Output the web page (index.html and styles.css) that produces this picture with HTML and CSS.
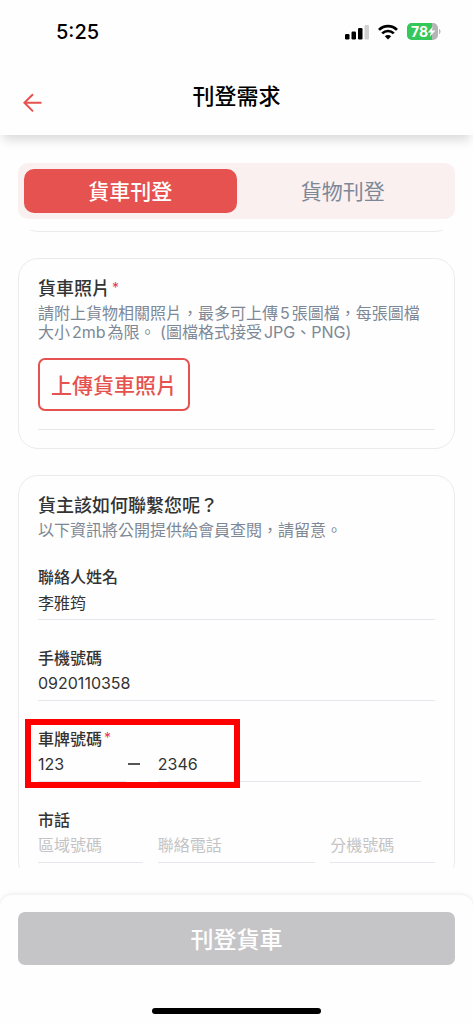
FILE: index.html
```html
<!DOCTYPE html>
<html lang="zh-Hant">
<head>
<meta charset="utf-8">
<meta name="viewport" content="width=device-width, initial-scale=1">
<title>刊登需求</title>
<link rel="stylesheet" href="styles.css">
</head>
<body>
<div class="app">
  <header class="top">
    <div class="status">
      <time class="clock">5:25</time>
      <div class="status-icons">
        <svg width="24" height="16" viewBox="0 0 24 16" aria-hidden="true">
          <rect x="0" y="10" width="4.500" height="5.500" rx="1.200"/>
          <rect x="6.500" y="7.500" width="4.500" height="8" rx="1.200"/>
          <rect x="13" y="4" width="4.500" height="11.500" rx="1.200"/>
          <rect x="19.500" y="1" width="4.500" height="14.500" rx="1.200" fill="#d0d0d0"/>
        </svg>
        <svg width="20" height="16" viewBox="0 0 20 16" fill="none" stroke="#000" stroke-width="2.7" aria-hidden="true">
          <path d="M1 5.9C6 .9 14 .9 19 5.9"/>
          <path d="M4.2 9.4c3.3-3.2 8.3-3.2 11.6 0"/>
          <path d="M6.8 12.2c1.8-1.7 4.6-1.7 6.4 0L10 15.6z" fill="#000" stroke="none"/>
        </svg>
        <svg width="34" height="18" viewBox="0 0 34 18" aria-label="78%">
          <defs><clipPath id="cell"><rect width="31" height="17" rx="5"/></clipPath></defs>
          <g clip-path="url(#cell)"><rect width="31" height="17" fill="#b5b5b5"/><rect width="25" height="17" fill="#34c759"/></g>
          <path d="M32 6c2 .6 2 4.400 0 5z" fill="#b5b5b5"/>
          <text class="charge" x="4" y="14">78</text>
          <path d="M25.800 3.500 20.800 9.500h3.200L22.600 14l5.800-6.500h-3.600z" fill="#fff"/>
        </svg>
      </div>
    </div>
    <div class="bar">
      <button class="back" type="button" aria-label="返回">
        <svg width="20" height="20" viewBox="0 0 20 20" fill="none" stroke="#e5524f" stroke-width="2"><path d="M18.500 9.800H1.500M10 1.200 1.400 9.800l8.600 8.600"/></svg>
      </button>
      <h1 class="title">刊登需求</h1>
    </div>
  </header>

  <main class="content">
    <nav class="tabs">
      <button class="tab tab-active" type="button">貨車刊登</button>
      <button class="tab" type="button">貨物刊登</button>
    </nav>

    <form class="scroll" id="truck-form">
      <div class="previous"></div>

      <section class="card">
        <h2 class="heading">貨車照片<span class="required">*</span></h2>
        <p class="hint">請附上貨物相關照片，最多可上傳5張圖檔，每張圖檔大小2mb為限。 (圖檔格式接受JPG、PNG)</p>
        <button class="upload" type="button">上傳貨車照片</button>
        <hr class="rule">
      </section>

      <section class="card">
        <h2 class="heading">貨主該如何聯繫您呢？</h2>
        <p class="hint">以下資訊將公開提供給會員查閱，請留意。</p>
        <div class="fields">
          <div class="field">
            <label class="label" for="name">聯絡人姓名</label>
            <input class="input" id="name" type="text" value="李雅筠">
          </div>
          <div class="field">
            <label class="label" for="mobile">手機號碼</label>
            <input class="input" id="mobile" type="tel" value="0920110358">
          </div>
          <div class="field">
            <label class="label" for="plate">車牌號碼<span class="required">*</span></label>
            <div class="plate">
              <input class="input" id="plate" type="text" value="123">
              <span class="dash"></span>
              <input class="input" type="text" value="2346" aria-label="車牌號碼後段">
            </div>
            <div class="highlight"></div>
          </div>
          <div class="field">
            <label class="label" for="area">市話</label>
            <div class="landline">
              <input class="input" id="area" type="tel" placeholder="區域號碼">
              <input class="input" type="tel" placeholder="聯絡電話" aria-label="聯絡電話">
              <input class="input" type="tel" placeholder="分機號碼" aria-label="分機號碼">
            </div>
          </div>
        </div>
      </section>
    </form>
  </main>

  <footer class="bottom">
    <button class="submit" type="submit" form="truck-form" disabled>刊登貨車</button>
    <div class="home"></div>
  </footer>
</div>
</body>
</html>
```
FILE: styles.css
```css
* {
  box-sizing: border-box;
}

body {
  margin: 0;
  background: #fefefe;
  color: #333;
  font-family: Inter, "Noto Sans CJK TC", sans-serif;
  font-size: 16px;
  text-autospace: normal;
}

button,
input {
  font: inherit;
}

.app {
  display: flex;
  flex-direction: column;
  height: 100vh;
}

.top {
  background: #fefefe;
  box-shadow: 0 8px 10px -3px rgba(0, 0, 0, 0.14);
}

.status {
  display: flex;
  align-items: center;
  justify-content: space-between;
  height: 56px;
  padding: 7px 32px 0 56px;
}

.clock {
  color: #000;
  font-size: 20px;
  font-weight: 500;
}

.status-icons {
  display: flex;
  align-items: center;
  gap: 9px;
}

.charge {
  fill: #fff;
  font-size: 14px;
  font-weight: 700;
}

.bar {
  display: grid;
  grid-template-columns: 20px 1fr 20px;
  align-items: center;
  height: 79px;
  padding: 0 23px;
}

.back {
  height: 20px;
  padding: 0;
  border: 0;
  background: none;
  margin-top: 14px;
}

.back svg {
  display: block;
}

.title {
  margin: 0;
  color: #000;
  font-size: 22px;
  font-weight: 500;
  line-height: 32px;
  text-align: center;
}

.content {
  display: flex;
  flex: 1;
  flex-direction: column;
  min-height: 0;
  padding: 28px 18px 27px;
}

.tabs {
  display: grid;
  grid-template-columns: 1fr 1fr;
  padding: 6px;
  border-radius: 10px;
  background: #fbf0f0;
}

.tab {
  height: 44px;
  padding: 0 0 2px;
  border: 0;
  border-radius: 10px;
  background: none;
  color: #7d8896;
  font-size: 21px;
}

.tab-active {
  background: #e5524f;
  color: #fff;
  font-weight: 500;
}

.scroll {
  display: flex;
  flex: 1;
  flex-direction: column;
  gap: 26px;
  min-height: 0;
  margin-top: 11px;
  overflow: hidden;
}

.previous,
.card {
  flex-shrink: 0;
  border: 1px solid #ebebef;
  border-radius: 20px;
}

.previous {
  height: 42px;
  margin-top: -40px;
}

.card {
  padding: 18px 19px;
}

.heading {
  margin: 0 0 3px;
  font-size: 18px;
  font-weight: 500;
  line-height: 24px;
}

.required {
  margin-left: 2px;
  color: #e8365d;
  font-size: 14px;
  font-weight: 400;
  line-height: 1;
  vertical-align: 2px;
}

.hint {
  margin: 0;
  color: #7d8896;
  line-height: 19px;
}

.upload {
  height: 53px;
  margin: 16px 0 0;
  padding: 0 11px 2px;
  border: 2px solid #e5524f;
  border-radius: 7px;
  background: none;
  color: #e5524f;
  font-size: 21px;
  font-weight: 500;
}

.rule {
  margin: 18px 0 0;
  border: 0;
  border-top: 1px solid #e8e8ea;
}

.fields {
  display: grid;
  gap: 26px;
  margin-top: 25px;
}

.field {
  position: relative;
}

.label {
  display: block;
  height: 24px;
  font-weight: 500;
  line-height: 24px;
}

.input {
  display: block;
  width: 100%;
  min-width: 0;
  height: 31px;
  padding: 0 0 5px;
  border: 0;
  border-bottom: 1px solid #e6e6ec;
  border-radius: 0;
  background: none;
  color: #333;
}

.input::placeholder {
  color: #c4c4c6;
}

.plate {
  display: grid;
  grid-template-columns: 1fr 32px 3fr;
  padding-right: 14px;
}

.dash {
  width: 12px;
  height: 2px;
  margin: 12px 0 0 2px;
  background: #555;
}

.highlight {
  position: absolute;
  top: -8px;
  left: -13px;
  width: 215px;
  height: 69px;
  border: 6px solid #f00;
  pointer-events: none;
}

.landline {
  display: grid;
  grid-template-columns: 2fr 3fr 2fr;
  gap: 15px;
}

.bottom {
  padding: 17px 18px 10px;
  border-radius: 12px 12px 0 0;
  background: #fefefe;
  box-shadow: 0 -1px 4px rgba(0, 0, 0, 0.08);
}

.submit {
  display: block;
  width: 100%;
  height: 53px;
  padding: 0 0 2px;
  border: 0;
  border-radius: 7px;
  background: #c5c5c7;
  color: #fff;
  font-size: 23px;
  font-weight: 500;
}

.home {
  width: 169px;
  height: 6px;
  margin: 43px auto 0;
  border-radius: 3px;
  background: #000;
}
```
